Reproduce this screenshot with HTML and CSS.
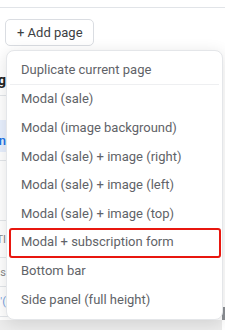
FILE: index.html
```html
<!DOCTYPE html>
<html lang="en">
<head>
  <meta charset="UTF-8">
  <title>Add page</title>
  <link rel="stylesheet" href="styles.css">
</head>
<body>
  <div class="topbar"></div>

  <div class="toolbar">
    <button class="add-btn">+ Add page</button>
  </div>

  <div class="workspace">
    <div class="sheet">
      <div class="strip">
        <div class="row row-head"><span class="heading">Settings heading</span></div>
        <div class="row row-gap"></div>
        <div class="row row-active"><span class="link">Button</span></div>
        <div class="row row-gap2"></div>
        <div class="row row-tall"></div>
        <div class="row row-a"><span class="faint">TITLE TI</span></div>
        <div class="row row-b"><span class="faint">Options</span></div>
        <div class="row row-c"><span class="faint blue">'(</span></div>
      </div>
      <div class="main"></div>
      <div class="scroll"><div class="thumb"></div></div>
    </div>
    <div class="footer"></div>
  </div>

  <div class="menu">
    <div class="item">Duplicate current page</div>
    <div class="sep"></div>
    <div class="item">Modal (sale)</div>
    <div class="item">Modal (image background)</div>
    <div class="item">Modal (sale) + image (right)</div>
    <div class="item">Modal (sale) + image (left)</div>
    <div class="item">Modal (sale) + image (top)</div>
    <div class="item marked">Modal + subscription form</div>
    <div class="item">Bottom bar</div>
    <div class="item">Side panel (full height)</div>
  </div>
</body>
</html>
```

FILE: styles.css
```css
body {
  margin: 0;
  width: 225px;
  height: 330px;
  overflow: hidden;
  position: relative;
  background: #fff;
  font-family: Roboto, 'Noto Sans', sans-serif;
  font-size: 13px;
}

.topbar {
  height: 7px;
  border-bottom: 1px solid #e1e4e8;
}

.toolbar {
  padding: 11px 0 0 5px;
  height: 34px;
  box-sizing: border-box;
}

.add-btn {
  height: 27px;
  padding: 0 10px 0 11px;
  border: 1px solid #dadde2;
  border-radius: 5px;
  background: #fff;
  color: #3c4043;
  font-family: inherit;
  font-size: 13px;
  cursor: pointer;
}

.workspace {
  display: flex;
  flex-direction: column;
  height: 288px;
}

.sheet {
  flex: 1;
  display: flex;
}

.strip {
  width: 10px;
  overflow: hidden;
  display: flex;
  flex-direction: column;
}

.row {
  display: flex;
  justify-content: flex-end;
  align-items: center;
  white-space: nowrap;
  border-bottom: 1px solid #e3e6ea;
  padding-right: 4px;
  box-sizing: border-box;
  flex-shrink: 0;
}

.row-head { height: 54px; align-items: flex-start; padding-top: 30px; }
.row-gap { height: 24px; border-bottom: none; }
.row-active { height: 32px; background: #e8f0fe; border-bottom: none; align-items: flex-end; padding-bottom: 4px; }
.row-gap2 { height: 9px; }
.row-tall { height: 60px; }
.row-a { height: 37px; }
.row-b { height: 29px; }
.row-c { height: 30px; }

.heading {
  font-weight: bold;
  font-size: 14px;
  color: #222;
}

.link {
  color: #1a73e8;
  font-weight: 500;
  font-size: 13px;
}

.faint {
  color: #888;
  font-size: 11px;
}

.faint.blue {
  color: #7aa2e0;
}

.main {
  flex: 1;
}

.scroll {
  width: 3px;
  display: flex;
  flex-direction: column;
  justify-content: flex-end;
}

.thumb {
  height: 13px;
  background: #8c8f94;
}

.footer {
  height: 10px;
  background: #ececec;
  margin-right: 3px;
}

/* dropdown */
.menu {
  position: absolute;
  left: 6px;
  top: 50px;
  width: 217px;
  box-sizing: border-box;
  padding: 4px 0 6px;
  background: #fff;
  border: 1px solid #e4e6e9;
  border-radius: 8px;
  box-shadow: 0 3px 16px rgba(0, 0, 0, 0.12);
}

.item {
  position: relative;
  height: 28.6px;
  display: flex;
  align-items: center;
  padding-left: 14px;
  color: #5f6368;
  white-space: nowrap;
}

.sep {
  height: 1px;
  margin: 0 3px;
  background: #eeeff1;
}

.marked::after {
  content: "";
  position: absolute;
  left: 2px;
  right: 1px;
  top: 0;
  bottom: -2px;
  border: 2px solid #e8170f;
  border-radius: 3px;
}
```
